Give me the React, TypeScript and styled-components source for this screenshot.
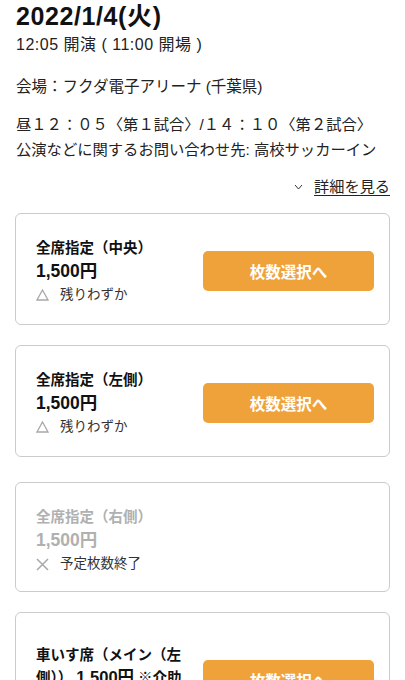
import styled, { createGlobalStyle } from "styled-components";

const GlobalStyle = createGlobalStyle`
  body {
    margin: 0;
    background: #fff;
    color: #222;
    font-family: "Liberation Sans", "Noto Sans CJK JP", sans-serif;
  }
`;

const Page = styled.div`
  padding: 0 15px 0 16px;
`;

const DateTitle = styled.h1`
  margin: 0;
  font-size: 25px;
  letter-spacing: 0.6px;
  line-height: 32px;
  font-weight: 700;
  color: #111;
`;

const Line = styled.p<{ $top?: number; $size?: number; $spacing?: number }>`
  margin: ${(p) => p.$top ?? 0}px 0 0;
  font-size: ${(p) => p.$size ?? 15.3}px;
  letter-spacing: ${(p) => p.$spacing ?? 0}px;
  line-height: 25px;
`;

const Collapsed = styled.div`
  margin-top: 13px;
  max-height: 50px;
  overflow: hidden;
`;

const MoreRow = styled.div`
  display: flex;
  justify-content: flex-end;
  align-items: center;
  gap: 11px;
  margin-top: 12px;
  font-size: 15.2px;
  line-height: 25px;
`;

const MoreLink = styled.a`
  color: #222;
  text-decoration: underline;
  text-decoration-thickness: 1px;
  text-underline-offset: 3px;
`;

const CardList = styled.div`
  margin-top: 14px;
  display: flex;
  flex-direction: column;
`;

const Card = styled.div<{ $padTop?: number; $start?: boolean; $off?: boolean }>`
  display: flex;
  align-items: ${(p) => (p.$start ? "flex-start" : "center")};
  gap: 12px;
  box-sizing: border-box;
  margin: ${(p) => (p.$off ? 5 : 0)}px 0 20px -1px;
  padding: ${(p) => p.$padTop ?? 20}px 15px ${(p) => (p.$off ? 15 : 17)}px 20px;
  border: 1px solid #cbcbcb;
  border-radius: 6px;
`;

const Info = styled.div<{ $off?: boolean }>`
  flex: 1;
  padding-top: 3px;
  color: ${(p) => (p.$off ? "#b0b0b0" : "#111")};
`;

const SeatName = styled.div`
  font-size: 14.5px;
  font-weight: 700;
  line-height: 23px;
`;

const Price = styled.div`
  font-size: 17.5px;
  font-weight: 700;
  line-height: 23px;
`;

const InlinePrice = styled.span`
  font-size: 16.5px;
  line-height: 1;
`;

const Status = styled.div`
  display: flex;
  align-items: center;
  gap: 11px;
  font-size: 13.5px;
  line-height: 24px;
  color: #333;
`;

const SelectButton = styled.button<{ $offset?: number }>`
  flex: 0 0 171px;
  height: 40px;
  margin-top: ${(p) => p.$offset ?? 0}px;
  border: none;
  border-radius: 5px;
  background: #f0a23a;
  color: #fff;
  font-family: inherit;
  font-size: 15.5px;
  font-weight: 700;
  cursor: pointer;
`;

const Triangle = () => (
  <svg width="13" height="12" viewBox="0 0 13 12">
    <polygon points="6.5,1 12,11 1,11" fill="none" stroke="#a8a8a8" strokeWidth="1.3" />
  </svg>
);

const Cross = () => (
  <svg width="13" height="13" viewBox="0 0 13 13">
    <path d="M1 1 L12 12 M12 1 L1 12" stroke="#a8a8a8" strokeWidth="1.5" />
  </svg>
);

const Chevron = () => (
  <svg width="9" height="6" viewBox="0 0 9 6">
    <polyline points="1,1 4.5,5 8,1" fill="none" stroke="#333" strokeWidth="1" />
  </svg>
);

type Seat = { name: string; price: string; status: "few" | "soldout" };

const seats: Seat[] = [
  { name: "全席指定（中央）", price: "1,500円", status: "few" },
  { name: "全席指定（左側）", price: "1,500円", status: "few" },
  { name: "全席指定（右側）", price: "1,500円", status: "soldout" },
];

function App() {
  return (
    <Page>
      <GlobalStyle />
      <DateTitle>2022/1/4(火)</DateTitle>
      <Line $size={16} $spacing={0.5}>12:05 開演 ( 11:00 開場 )</Line>
      <Line $top={17} $size={15.5}>会場：フクダ電子アリーナ (千葉県)</Line>
      <Collapsed>
        <Line>昼１２：０５〈第１試合〉/１４：１０〈第２試合〉</Line>
        <Line>公演などに関するお問い合わせ先: 高校サッカーイン</Line>
      </Collapsed>
      <MoreRow>
        <Chevron />
        <MoreLink>詳細を見る</MoreLink>
      </MoreRow>
      <CardList>
        {seats.map((s) => {
          const off = s.status === "soldout";
          return (
            <Card key={s.name} $off={off}>
              <Info $off={off}>
                <SeatName>{s.name}</SeatName>
                <Price>{s.price}</Price>
                <Status>
                  {off ? <Cross /> : <Triangle />}
                  {off ? "予定枚数終了" : "残りわずか"}
                </Status>
              </Info>
              {!off && <SelectButton>枚数選択へ</SelectButton>}
            </Card>
          );
        })}
        <Card $padTop={28} $start>
          <Info>
            <SeatName>
              車いす席（メイン（左側）） <InlinePrice>1,500円</InlinePrice> ※介助者1名同伴可
            </SeatName>
          </Info>
          <SelectButton $offset={19}>枚数選択へ</SelectButton>
        </Card>
      </CardList>
    </Page>
  );
}

export default App;
